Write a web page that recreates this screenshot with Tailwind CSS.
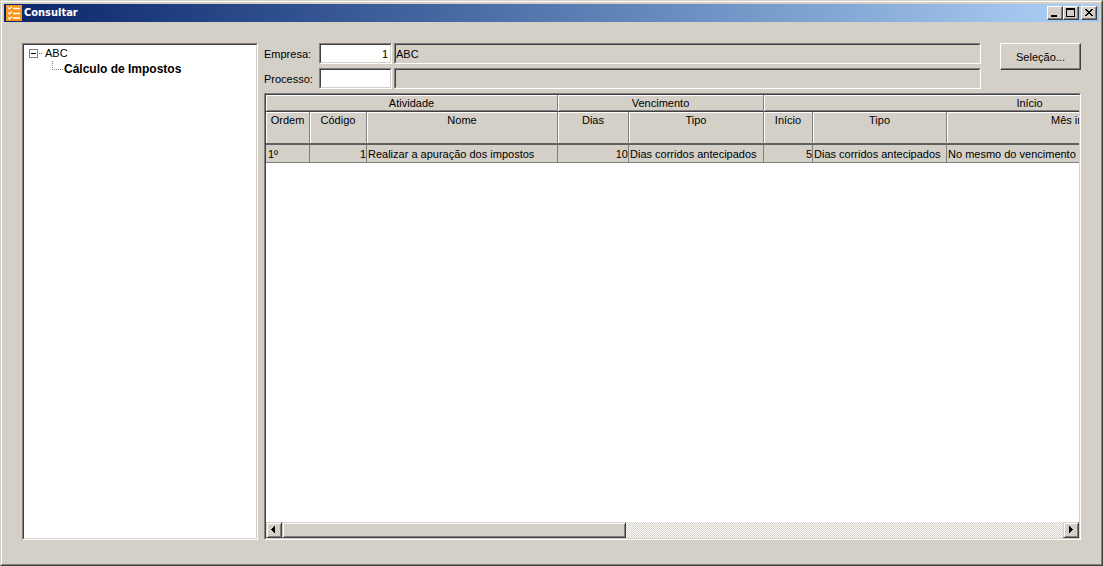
<!DOCTYPE html>
<html lang="pt-BR">
<head>
<meta charset="utf-8">
<title>Consultar</title>
<script src="https://cdn.jsdelivr.net/npm/@tailwindcss/browser@4"></script>
</head>
<body class="flex h-screen flex-col overflow-hidden border-t border-l border-r border-b border-t-[#d4d0c8] border-l-[#d4d0c8] border-r-[#404040] border-b-[#404040] bg-[#d4d0c8] font-['Liberation_Sans',sans-serif] text-[11px] leading-4 text-black">
<div class="flex min-h-0 flex-1 flex-col border border-t-white border-l-white border-r-[#808080] border-b-[#808080] p-[2px]">
  <header class="flex h-[18px] shrink-0 items-center bg-linear-to-r from-[#0a246a] to-[#a6caf0] to-95% pr-[2px] pl-[2px]">
    <svg class="h-4 w-4" viewBox="0 0 16 16" aria-hidden="true">
      <rect width="16" height="16" fill="#f7941d"/>
      <path d="M7 3.500h7M7 8.500h7M7 13h7" stroke="#fff" stroke-width="1.500"/>
      <path d="M2 2.500l1.500 1.500L6 1.500M2 7.500l1.500 1.500L6 6.500M2 12.500l1.500 1.500L6 11.500" fill="none" stroke="#fff" stroke-width="1.200"/>
    </svg>
    <h1 class="ml-[2px] flex-1 font-['DejaVu_Sans_Condensed','DejaVu_Sans',sans-serif] text-[11px] font-bold text-white">Consultar</h1>
    <div class="flex">
      <button aria-label="Minimizar" class="h-[14px] w-4 border border-t-white border-l-white border-r-[#404040] border-b-[#404040] bg-[#d4d0c8] shadow-[inset_-1px_-1px_#808080]"><svg class="h-3 w-[14px]" viewBox="0 0 14 12" shape-rendering="crispEdges"><path d="M3 8h6v2H3z"/></svg></button>
      <button aria-label="Maximizar" class="h-[14px] w-4 border border-t-white border-l-white border-r-[#404040] border-b-[#404040] bg-[#d4d0c8] shadow-[inset_-1px_-1px_#808080]"><svg class="h-3 w-[14px]" viewBox="0 0 14 12" shape-rendering="crispEdges"><path fill-rule="evenodd" d="M2 1h9v9H2zM3 3v6h7V3z"/></svg></button>
      <button aria-label="Fechar" class="ml-[2px] h-[14px] w-4 border border-t-white border-l-white border-r-[#404040] border-b-[#404040] bg-[#d4d0c8] shadow-[inset_-1px_-1px_#808080]"><svg class="h-3 w-[14px]" viewBox="0 0 14 12" shape-rendering="crispEdges"><path d="M3 2h2v1h1v1h2V3h1V2h2v1h-1v1H9v1H8v1h1v1h1v1h1v1H9V8H8V7H6v1H5v1H3V8h1V7h1V6h1V5H5V4H4V3H3z"/></svg></button>
    </div>
  </header>

  <main class="flex min-h-0 flex-1 gap-[6px] pt-[21px] pr-[18px] pb-[22px] pl-[18px]">
    <nav aria-label="Processos" class="w-[236px] shrink-0 border border-t-[#808080] border-l-[#808080] border-r-white border-b-white">
      <div class="h-full border border-t-[#404040] border-l-[#404040] border-r-[#d4d0c8] border-b-[#d4d0c8] bg-white pl-[5px]">
        <ul>
          <li>
            <div class="flex h-4 items-center">
              <svg class="h-4 w-4" viewBox="0 0 16 16" shape-rendering="crispEdges" aria-hidden="true"><path d="M.5 4.500h8v8h-8z" fill="none" stroke="#808080"/><path d="M2 8h5v1H2z"/><path d="M10 8.500h4" stroke="#808080" stroke-dasharray="1 1"/></svg>
              <span>ABC</span>
            </div>
            <ul>
              <li class="flex h-4 items-center">
                <svg class="ml-[23px] h-4 w-3" viewBox="0 0 12 16" shape-rendering="crispEdges" aria-hidden="true"><path d="M.5 0v8.500h10" fill="none" stroke="#808080" stroke-dasharray="1 1"/></svg>
                <span class="text-[12px] font-bold">Cálculo de Impostos</span>
              </li>
            </ul>
          </li>
        </ul>
      </div>
    </nav>

    <section class="flex min-w-0 flex-1 flex-col">
      <div class="flex items-start gap-[19px]">
        <form class="flex min-w-0 flex-1 flex-col gap-1">
          <div class="flex h-[21px] items-center">
            <label for="empresa" class="w-[55px]">Empresa:</label>
            <div class="w-[73px] border border-t-[#808080] border-l-[#808080] border-r-white border-b-white"><input id="empresa" value="1" class="block h-[19px] w-full border border-t-[#404040] border-l-[#404040] border-r-[#d4d0c8] border-b-[#d4d0c8] bg-white pr-[2px] text-right outline-none"></div>
            <div class="ml-[2px] min-w-0 flex-1 border border-t-[#808080] border-l-[#808080] border-r-white border-b-white"><input aria-label="Nome da empresa" readonly value="ABC" class="block h-[19px] w-full border border-t-[#404040] border-l-[#404040] border-r-[#d4d0c8] border-b-[#d4d0c8] outline-none"></div>
          </div>
          <div class="flex h-[21px] items-center">
            <label for="processo" class="w-[55px]">Processo:</label>
            <div class="w-[73px] border border-t-[#808080] border-l-[#808080] border-r-white border-b-white"><input id="processo" class="block h-[19px] w-full border border-t-[#404040] border-l-[#404040] border-r-[#d4d0c8] border-b-[#d4d0c8] bg-white pr-[2px] text-right outline-none"></div>
            <div class="ml-[2px] min-w-0 flex-1 border border-t-[#808080] border-l-[#808080] border-r-white border-b-white"><input aria-label="Nome do processo" readonly class="block h-[19px] w-full border border-t-[#404040] border-l-[#404040] border-r-[#d4d0c8] border-b-[#d4d0c8] outline-none"></div>
          </div>
        </form>
        <button class="h-[27px] w-[81px] border border-t-white border-l-white border-r-[#404040] border-b-[#404040] shadow-[inset_-1px_-1px_#808080]">Seleção...</button>
      </div>

      <div class="mt-1 flex min-h-0 flex-1 border border-t-[#808080] border-l-[#808080] border-r-white border-b-white">
        <div class="flex min-w-0 flex-1 flex-col border border-t-[#404040] border-l-[#404040] border-r-[#d4d0c8] border-b-[#d4d0c8] bg-white">
          <div class="min-h-0 flex-1 overflow-hidden">
            <table class="w-[1030px] table-fixed border-separate border-spacing-0 bg-[#d4d0c8]">
              <colgroup><col class="w-[44px]"><col class="w-[57px]"><col class="w-[191px]"><col class="w-[71px]"><col class="w-[135px]"><col class="w-[49px]"><col class="w-[134px]"><col class="w-[349px]"></colgroup>
              <thead class="[&_th]:border-r [&_th]:border-r-[#808080] [&_th]:p-0 [&_th]:text-center [&_th]:font-normal">
                <tr class="[&>th]:h-[17px] [&>th]:border-b [&>th]:border-b-[#404040] [&>th]:pt-[1px] [&>th]:leading-[15px] [&>th]:shadow-[inset_1px_1px_#fff,inset_0_-1px_#808080]">
                  <th colspan="3" scope="colgroup">Atividade</th><th colspan="2" scope="colgroup">Vencimento</th><th colspan="3" scope="colgroup">Início</th>
                </tr>
                <tr class="[&>th]:h-[33px] [&>th]:border-b-2 [&>th]:border-b-[#606060] [&>th]:align-top [&>th]:shadow-[inset_1px_1px_#fff]">
                  <th scope="col">Ordem</th><th scope="col">Código</th><th scope="col">Nome</th><th scope="col">Dias</th><th scope="col">Tipo</th><th scope="col">Início</th><th scope="col">Tipo</th><th scope="col">Mês início em relação ao fim</th>
                </tr>
              </thead>
              <tbody>
                <tr class="[&>td]:h-[18px] [&>td]:overflow-hidden [&>td]:border-r [&>td]:border-b [&>td]:border-[#808080] [&>td]:p-0 [&>td]:whitespace-nowrap">
                  <td><span class="pl-[2px]">1º</span></td><td class="text-right">1</td><td><span class="pl-[1px]">Realizar a apuração dos impostos</span></td><td class="text-right">10</td><td><span class="pl-[1px]">Dias corridos antecipados</span></td><td class="text-right">5</td><td><span class="pl-[1px]">Dias corridos antecipados</span></td><td><span class="pl-[1px]">No mesmo do vencimento</span></td>
                </tr>
              </tbody>
            </table>
          </div>
          <div class="flex h-4 shrink-0 bg-[repeating-conic-gradient(#d4d0c8_0_25%,#fff_0_50%)] bg-size-[2px_2px]">
            <button aria-label="Rolar para a esquerda" class="h-4 w-4 border border-t-[#d4d0c8] border-l-[#d4d0c8] border-r-[#404040] border-b-[#404040] bg-[#d4d0c8] shadow-[inset_1px_1px_#fff,inset_-1px_-1px_#808080]"><svg class="h-[14px] w-[14px]" viewBox="0 0 14 14" shape-rendering="crispEdges"><path d="M4 6h1V5h1V4h1V3h1v7H7V9H6V8H5V7H4z"/></svg></button>
            <div class="h-4 w-[344px] border border-t-[#d4d0c8] border-l-[#d4d0c8] border-r-[#404040] border-b-[#404040] bg-[#d4d0c8] shadow-[inset_1px_1px_#fff,inset_-1px_-1px_#808080]"></div>
            <button aria-label="Rolar para a direita" class="ml-auto h-4 w-4 border border-t-[#d4d0c8] border-l-[#d4d0c8] border-r-[#404040] border-b-[#404040] bg-[#d4d0c8] shadow-[inset_1px_1px_#fff,inset_-1px_-1px_#808080]"><svg class="h-[14px] w-[14px]" viewBox="0 0 14 14" shape-rendering="crispEdges"><path d="M5 3h1v1h1v1h1v1h1v1H8v1H7v1H6v1H5z"/></svg></button>
          </div>
        </div>
      </div>
    </section>
  </main>
</div>
</body>
</html>
